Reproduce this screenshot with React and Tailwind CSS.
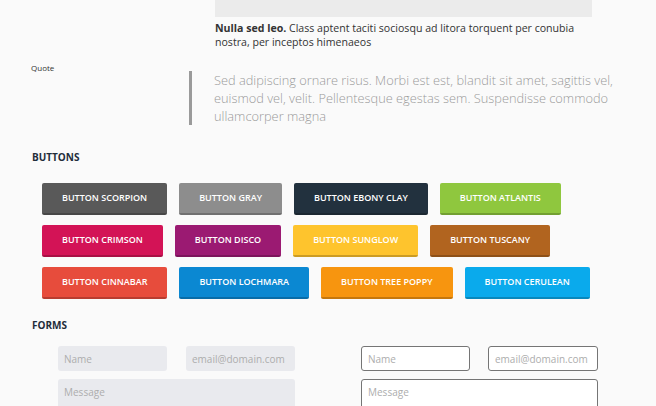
import React from 'react';

const buttonRows = [
  [
    { label: 'Button Scorpion', color: 'bg-[#595959]' },
    { label: 'Button Gray', color: 'bg-[#8d8d8d]' },
    { label: 'Button Ebony Clay', color: 'bg-[#22313e]' },
    { label: 'Button Atlantis', color: 'bg-[#8fc73e]' },
  ],
  [
    { label: 'Button Crimson', color: 'bg-[#d31356]' },
    { label: 'Button Disco', color: 'bg-[#9b1a72]' },
    { label: 'Button Sunglow', color: 'bg-[#fec42d]' },
    { label: 'Button Tuscany', color: 'bg-[#b1641f]' },
  ],
  [
    { label: 'Button Cinnabar', color: 'bg-[#e74c3c]' },
    { label: 'Button Lochmara', color: 'bg-[#0b88d2]' },
    { label: 'Button Tree Poppy', color: 'bg-[#f7950f]' },
    { label: 'Button Cerulean', color: 'bg-[#0aaaec]' },
  ],
];

const SectionTitle = ({ children }) => (
  <h3 className="pl-[32px] text-[10px] leading-[14px] font-bold uppercase text-[#1f2d3a]">
    {children}
  </h3>
);

const FlatButton = ({ label, color }) => (
  <button
    className={`${color} h-[32px] px-[20px] rounded-[2px] border-b-2 border-black/20 text-[9px] font-semibold uppercase text-white`}
  >
    {label}
  </button>
);

const App = () => {
  return (
    <div className="w-[656px] h-[406px] overflow-hidden bg-[#fafafa] font-['Open_Sans',sans-serif] text-[#333]">
      {/* Figure with caption */}
      <section className="pl-[215px]">
        <div className="w-[377px] h-[17px] bg-[#ebebeb]" />
        <p className="mt-[4px] w-[377px] text-[10.6px] leading-[14px] text-[#333]">
          <b className="font-bold">Nulla sed leo.</b> Class aptent taciti sociosqu ad litora torquent per conubia nostra, per inceptos himenaeos
        </p>
      </section>

      {/* Quote */}
      <section className="mt-[13px] flex items-start">
        <div className="w-[189px] pl-[31px] text-[8px] leading-[11px] text-[#333]">Quote</div>
        <blockquote className="mt-[9px] w-[450px] border-l-[3px] border-[#9a9a9a] pl-[22px] text-[12.8px] leading-[18px] font-light text-[#9a9a9a]">
          Sed adipiscing ornare risus. Morbi est est, blandit sit amet, sagittis vel, euismod vel, velit. Pellentesque egestas sem. Suspendisse commodo ullamcorper magna
        </blockquote>
      </section>

      {/* Buttons */}
      <section className="mt-[25px]">
        <SectionTitle>Buttons</SectionTitle>
        <div className="mt-[19px] pl-[42px] flex flex-col gap-[10px]">
          {buttonRows.map((row, i) => (
            <div key={i} className="flex gap-[12px]">
              {row.map((b) => (
                <FlatButton key={b.label} {...b} />
              ))}
            </div>
          ))}
        </div>
      </section>

      {/* Forms */}
      <section className="mt-[19px]">
        <SectionTitle>Forms</SectionTitle>
        <div className="mt-[14px] pl-[58px] flex gap-[66px]">
          <div className="w-[237px] flex flex-col gap-[8px]">
            <div className="flex gap-[19px]">
              <input
                placeholder="Name"
                className="w-[109px] h-[25px] rounded-[3px] bg-[#e9eaee] px-[6px] text-[10px] placeholder:text-[#adadad] outline-none"
              />
              <input
                placeholder="email@domain.com"
                className="w-[109px] h-[25px] rounded-[3px] bg-[#e9eaee] px-[6px] text-[10px] placeholder:text-[#adadad] outline-none"
              />
            </div>
            <textarea
              placeholder="Message"
              className="w-[237px] h-[40px] rounded-[3px] bg-[#e9eaee] px-[6px] py-[6px] text-[10px] placeholder:text-[#adadad] outline-none resize-none"
            />
          </div>
          <div className="w-[237px] flex flex-col gap-[8px]">
            <div className="flex gap-[18px]">
              <input
                placeholder="Name"
                className="w-[109px] h-[25px] rounded-[3px] border border-[#757575] bg-white px-[6px] text-[10px] placeholder:text-[#adadad] outline-none"
              />
              <input
                placeholder="email@domain.com"
                className="w-[110px] h-[25px] rounded-[3px] border border-[#757575] bg-white px-[6px] text-[10px] placeholder:text-[#adadad] outline-none"
              />
            </div>
            <textarea
              placeholder="Message"
              className="w-[237px] h-[40px] rounded-[3px] border border-[#757575] bg-white px-[6px] py-[5px] text-[10px] placeholder:text-[#adadad] outline-none resize-none"
            />
          </div>
        </div>
      </section>
    </div>
  );
};

export default App;
